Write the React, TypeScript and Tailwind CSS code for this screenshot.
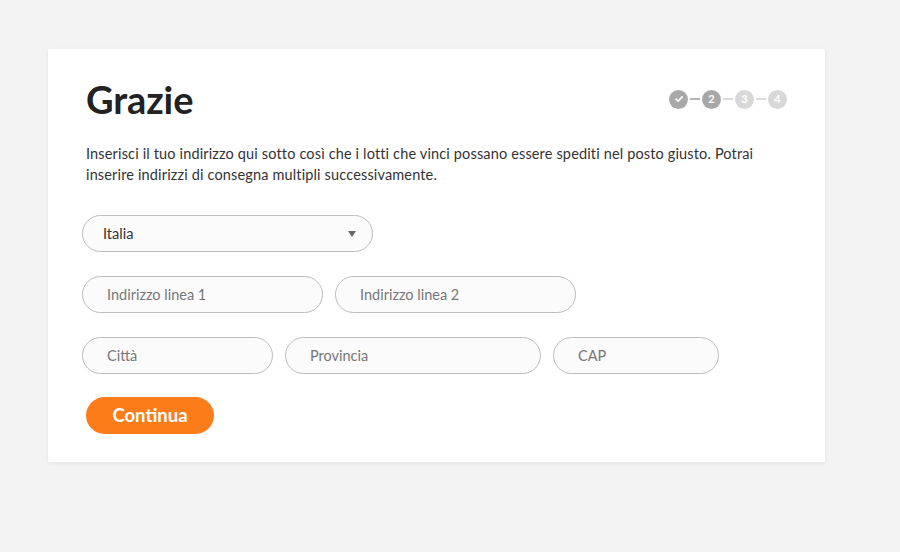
const steps = [
  { label: 'check', active: true },
  { label: '2', active: true },
  { label: '3', active: false },
  { label: '4', active: false },
]

function Steps() {
  return (
    <div className="flex items-center">
      {steps.map((step, index) => (
        <div key={step.label} className="flex items-center">
          {index > 0 && <span className={`mx-[2px] h-[2px] w-[10px] ${step.active ? 'bg-[#b5b5b5]' : 'bg-[#dcdcdc]'}`} />}
          <span
            className={`grid h-[19px] w-[19px] place-items-center rounded-full text-[11px] font-bold text-white ${
              step.active ? 'bg-[#a8a8a8]' : 'bg-[#d8d8d8]'
            }`}
          >
            {step.label === 'check' ? (
              <svg viewBox="0 0 12 12" className="h-[10px] w-[10px]">
                <path d="M2.5 6.2 L5 8.6 L9.6 3.6" fill="none" stroke="white" strokeWidth="2.2" strokeLinecap="round" strokeLinejoin="round" />
              </svg>
            ) : (
              step.label
            )}
          </span>
        </div>
      ))}
    </div>
  )
}

function Field({ placeholder, width }: { placeholder: string; width: string }) {
  return (
    <input
      type="text"
      placeholder={placeholder}
      className={`h-[37px] ${width} rounded-full border border-[#bdbdbd] bg-[#fbfbfb] px-6 text-[14.5px] text-[#333] placeholder:text-[#777] outline-none`}
    />
  )
}

export default function App() {
  return (
    <div className="min-h-[552px] bg-[#f3f3f3] pt-[49px] pl-[48px] font-['Lato',sans-serif]">
      <div className="w-[777px] bg-white px-[38px] pt-[30px] pb-[28px] shadow-[0_1px_4px_rgba(0,0,0,0.08)]">
        <div className="flex items-center justify-between">
          <h1 className="text-[38px] leading-[40px] font-bold tracking-[-0.1px] text-[#222]">Grazie</h1>
          <Steps />
        </div>

        <p className="mt-[24px] text-[14.5px] leading-[21px] tracking-[0.15px] text-[#333]">
          Inserisci il tuo indirizzo qui sotto così che i lotti che vinci possano essere spediti nel posto giusto. Potrai inserire indirizzi di consegna multipli successivamente.
        </p>

        <div className="-mx-1 mt-[30px] flex flex-col gap-[24px]">
          <div className="flex h-[37px] w-[291px] items-center rounded-full border border-[#bdbdbd] bg-[#fbfbfb] pr-4 pl-5 text-[14.5px] text-[#333]">
            <span className="flex-1">Italia</span>
            <svg viewBox="0 0 8 6" className="h-[6px] w-[8px]">
              <path d="M0 0 H8 L4 6 Z" fill="#666" />
            </svg>
          </div>

          <div className="flex gap-[12px]">
            <Field placeholder="Indirizzo linea 1" width="w-[241px]" />
            <Field placeholder="Indirizzo linea 2" width="w-[241px]" />
          </div>

          <div className="flex gap-[12px]">
            <Field placeholder="Città" width="w-[191px]" />
            <Field placeholder="Provincia" width="w-[256px]" />
            <Field placeholder="CAP" width="w-[166px]" />
          </div>
        </div>

        <button type="button" className="mt-[23px] h-[37px] w-[128px] rounded-full bg-[#fd7c1a] text-[18.5px] font-bold text-white">
          Continua
        </button>
      </div>
    </div>
  )
}
